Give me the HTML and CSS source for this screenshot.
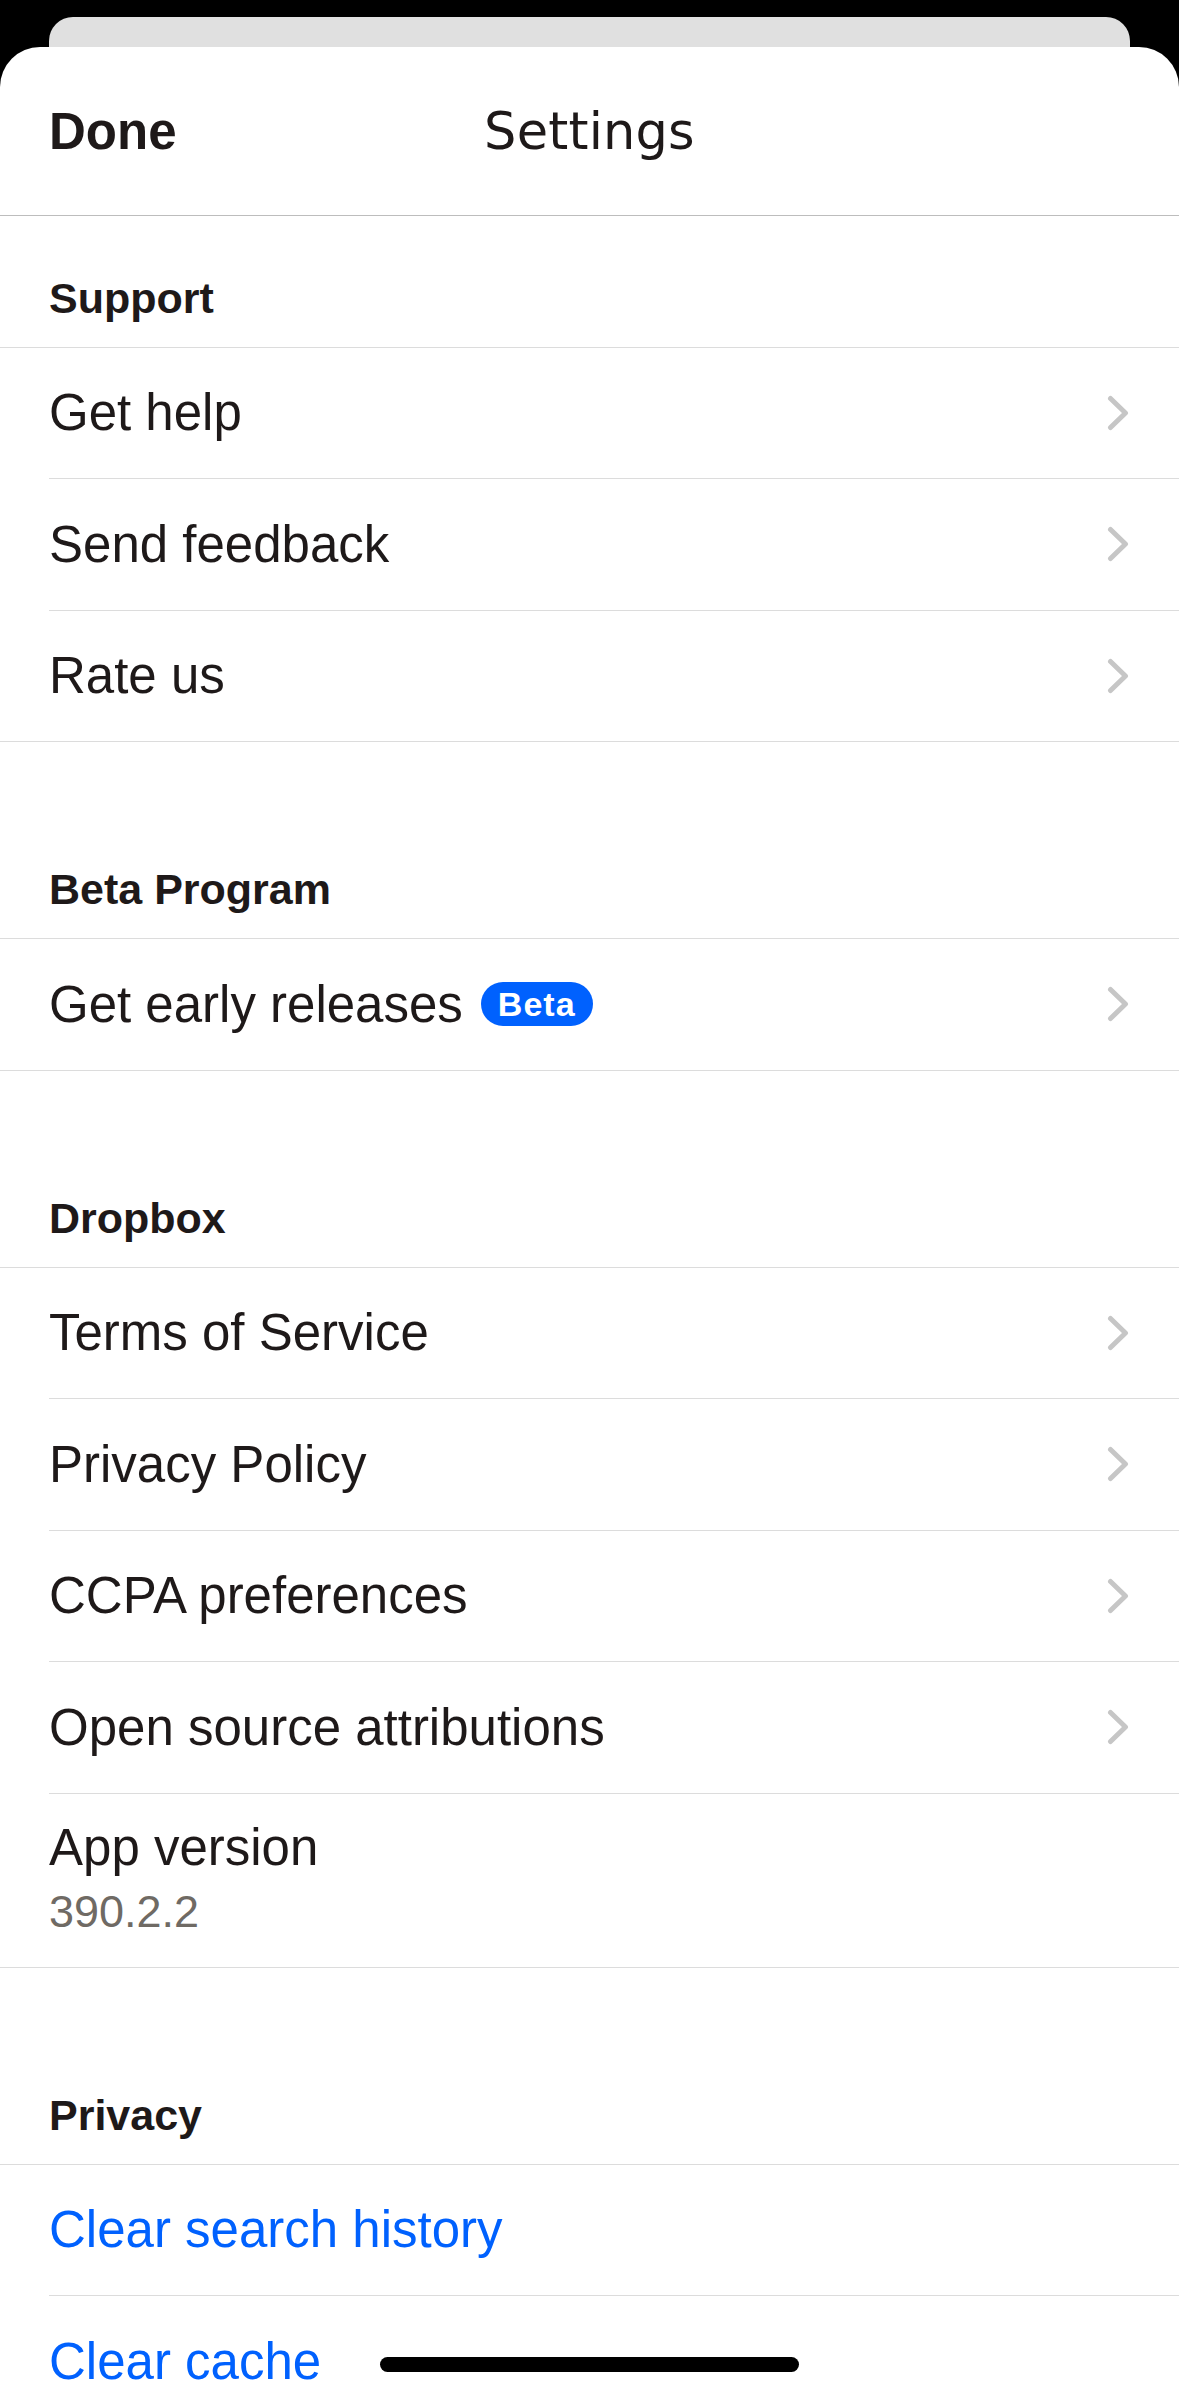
FILE: index.html
```html
<!DOCTYPE html>
<html lang="en">
<head>
<meta charset="utf-8">
<title>Settings</title>
<link rel="stylesheet" href="styles.css">
</head>
<body>
<div class="screen">
  <div class="back-card"></div>
  <div class="sheet">
    <header class="nav">
      <span class="nav-done">Done</span>
      <span class="nav-title">Settings</span>
      <span></span>
    </header>

    <section class="section first">
      <div class="section-header">Support</div>
      <div class="row"><span class="label">Get help</span><svg class="chev" viewBox="0 0 22 36" width="22" height="36"><polyline points="3.5,3.5 18.5,18 3.5,32.5"/></svg></div>
      <div class="row"><span class="label">Send feedback</span><svg class="chev" viewBox="0 0 22 36" width="22" height="36"><polyline points="3.5,3.5 18.5,18 3.5,32.5"/></svg></div>
      <div class="row"><span class="label">Rate us</span><svg class="chev" viewBox="0 0 22 36" width="22" height="36"><polyline points="3.5,3.5 18.5,18 3.5,32.5"/></svg></div>
    </section>

    <section class="section">
      <div class="section-header">Beta Program</div>
      <div class="row"><span class="label">Get early releases<span class="badge">Beta</span></span><svg class="chev" viewBox="0 0 22 36" width="22" height="36"><polyline points="3.5,3.5 18.5,18 3.5,32.5"/></svg></div>
    </section>

    <section class="section">
      <div class="section-header">Dropbox</div>
      <div class="row"><span class="label">Terms of Service</span><svg class="chev" viewBox="0 0 22 36" width="22" height="36"><polyline points="3.5,3.5 18.5,18 3.5,32.5"/></svg></div>
      <div class="row"><span class="label">Privacy Policy</span><svg class="chev" viewBox="0 0 22 36" width="22" height="36"><polyline points="3.5,3.5 18.5,18 3.5,32.5"/></svg></div>
      <div class="row"><span class="label">CCPA preferences</span><svg class="chev" viewBox="0 0 22 36" width="22" height="36"><polyline points="3.5,3.5 18.5,18 3.5,32.5"/></svg></div>
      <div class="row"><span class="label">Open source attributions</span><svg class="chev" viewBox="0 0 22 36" width="22" height="36"><polyline points="3.5,3.5 18.5,18 3.5,32.5"/></svg></div>
      <div class="row row-version">
        <span class="label">App version</span>
        <span class="version">390.2.2</span>
      </div>
    </section>

    <section class="section">
      <div class="section-header">Privacy</div>
      <div class="row"><span class="label link">Clear search history</span></div>
      <div class="row"><span class="label link">Clear cache</span></div>
    </section>
  </div>
  <div class="home-indicator"></div>
</div>
</body>
</html>
```

FILE: styles.css
```css
* { box-sizing: border-box; }

html, body {
  margin: 0;
  padding: 0;
  background: #000;
}

.screen {
  position: relative;
  width: 1179px;
  height: 2396px;
  overflow: hidden;
  background: #000;
  padding-top: 17px;
  font-family: "Liberation Sans", Arial, sans-serif;
  color: #1e1919;
}

.back-card {
  height: 30px;
  margin: 0 49px;
  background: #e0e0e0;
  border-radius: 24px 24px 0 0;
}

.sheet {
  background: #fff;
  border-radius: 40px 40px 0 0;
  min-height: 2400px;
}

.nav {
  height: 169px;
  display: grid;
  grid-template-columns: 1fr auto 1fr;
  align-items: center;
  padding: 0 49px;
  border-bottom: 1px solid #bdbdbd;
}

.nav-done {
  font-size: 51px;
  font-weight: 700;
  justify-self: start;
}

.nav-title {
  font-family: "DejaVu Sans", sans-serif;
  font-size: 51px;
  font-weight: 400;
  letter-spacing: 0.2px;
}

.section {
  border-bottom: 1px solid #dcdcdc;
  margin-top: 65.5px;
}

.section.first {
  margin-top: 0;
}

.section-header {
  height: 131.5px;
  display: flex;
  align-items: flex-end;
  padding: 0 49px 24px;
  font-size: 43px;
  font-weight: 700;
  border-bottom: 1px solid #dcdcdc;
}

.row {
  height: 131.5px;
  margin-left: 49px;
  padding-right: 50px;
  display: flex;
  align-items: center;
  justify-content: space-between;
  border-bottom: 1px solid #dcdcdc;
  font-size: 51px;
}

.row:last-child {
  border-bottom: none;
  height: 130.5px;
}

.label {
  display: flex;
  align-items: center;
  white-space: nowrap;
}

.link {
  color: #0061fe;
}

.chev {
  flex: none;
  fill: none;
  stroke: #c6c6c6;
  stroke-width: 5;
  stroke-linecap: round;
  stroke-linejoin: round;
}

.badge {
  display: inline-flex;
  align-items: center;
  height: 44px;
  margin-left: 18px;
  padding: 0 17px;
  border-radius: 22px;
  background: #0061fe;
  color: #fff;
  font-size: 34px;
  font-weight: 700;
  letter-spacing: 1px;
}

.row.row-version {
  height: 173px;
  flex-direction: column;
  align-items: flex-start;
  justify-content: flex-start;
  padding-top: 25px;
}

.row-version .label {
  line-height: 58px;
}

.version {
  margin-top: 9px;
  font-size: 45px;
  line-height: 52px;
  color: #6f6a64;
}

.home-indicator {
  position: absolute;
  left: 380px;
  top: 2357px;
  width: 419px;
  height: 15px;
  border-radius: 8px;
  background: #000;
}
```
